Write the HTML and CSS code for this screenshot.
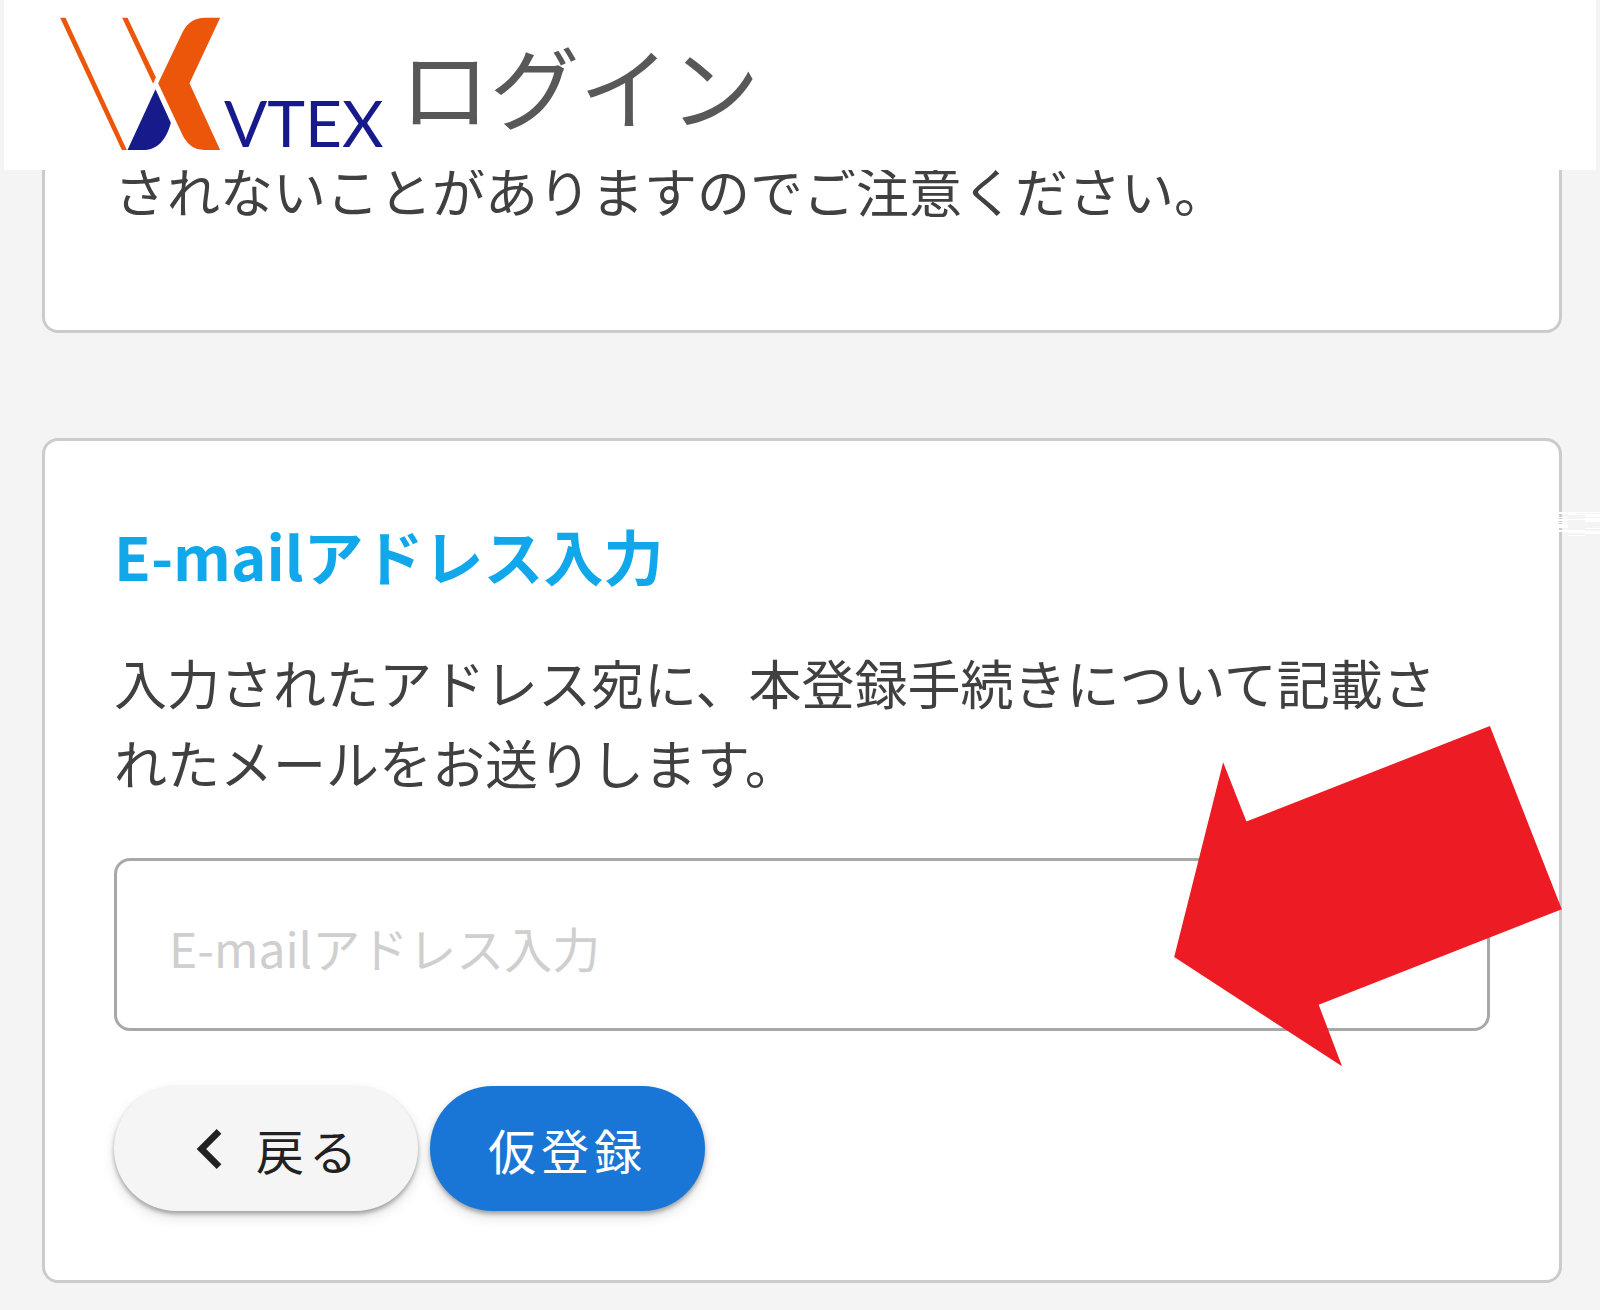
FILE: index.html
```
<!DOCTYPE html>
<html lang="ja">
<head>
  <meta charset="UTF-8" />
  <meta name="viewport" content="width=device-width, initial-scale=1.0" />
  <title>VTEX ログイン</title>
  <link rel="stylesheet" href="styles.css">
</head>
<body>
  <header>
    <div class="logo">
      <svg class="logo-mark" viewBox="180 50 482 402" aria-hidden="true">
        <path fill="#ec560b" d="M180 52H196L380 449H365Z" />
        <path fill="#ec560b" d="M366 52H382L467 231L459 250Z" />
        <path fill="#ec560b" d="M660 52H612C575 54 557 74 546 98L474 249L546 402C558 428 578 449 612 449H660L568 249Z" />
        <path fill="#171a8b" d="M466 267L512 367C500 415 472 449 430 449H382Z" />
      </svg>
      <span class="logo-name">VTEX</span>
    </div>
    <h1>ログイン</h1>
  </header>

  <main>
    <section class="card notice">
      <p>されないことがありますのでご注意ください。</p>
    </section>

    <section class="card">
      <h2>E-mailアドレス入力</h2>
      <p>入力されたアドレス宛に、本登録手続きについて記載されたメールをお送りします。</p>
      <form>
        <div class="field">
          <input type="email" aria-label="E-mailアドレス入力" placeholder="E-mailアドレス入力" />
          <svg class="arrow" viewBox="0 0 1164 1024" aria-hidden="true">
            <path fill="#ed1c24" d="M948 0L1164 550L434 837L504 1022L0 694L147 109L217 287Z" />
          </svg>
        </div>
        <div class="actions">
          <button type="button" class="btn btn-back">
            <svg viewBox="0 0 24 24" aria-hidden="true">
              <path d="M15.41 16.58L10.83 12L15.41 7.41L14 6L8 12L14 18Z" />
            </svg>
            戻る
          </button>
          <button type="submit" class="btn btn-primary">仮登録</button>
        </div>
      </form>
      <svg class="streaks" viewBox="0 0 41 26" aria-hidden="true">
        <path fill="#fff" d="M0 0H41V1H18V2H41V5H26V3H9V2H0ZM0 5H9V6H0ZM0 7H26V6H41V10H26V8H9V9H0ZM0 10H9V11H0ZM0 12H9V16H0ZM0 18H26V16H41V17H26V19H41V22H26V21H9V20H0ZM9 23H26V24H9Z" />
      </svg>
    </section>
  </main>
</body>
</html>
```
FILE: styles.css
```
/* ======================
   Base
   ====================== */
*, *::before, *::after {
  box-sizing: border-box;
  margin: 0;
  padding: 0;
}
body {
  font-family: "Noto Sans CJK JP", sans-serif;
  background-color: #f4f4f4;
  color: #404040;
}

/* ======================
   Header
   ====================== */
header {
  position: fixed;
  top: 0;
  left: 4px;
  right: 4px;
  z-index: 1;
  display: flex;
  align-items: center;
  gap: 16px;
  height: 170px;
  padding: 0 56px 3px;
  background-color: #fff;
}
header h1 {
  font-size: 90px;
  font-weight: 400;
  line-height: 120px;
  color: #585858;
}
.logo {
  display: flex;
  align-items: flex-end;
  gap: 3px;
}
.logo-mark {
  width: 161px;
  height: 134px;
}
.logo-name {
  font-family: Lato, sans-serif;
  font-size: 64px;
  line-height: 56px;
  color: #171a8b;
}

/* ======================
   Cards
   ====================== */
main {
  padding: 0 38px 26px 42px;
}
.card {
  position: relative;
  padding: 74px 69px 69px;
  border: 3px solid #cbcbcb;
  border-radius: 16px;
  background-color: #fff;
}
.notice {
  margin-bottom: 105px;
  padding: 147px 69px 100px;
}
.card h2 {
  margin-bottom: 47px;
  font-size: 60px;
  font-weight: 700;
  line-height: 80px;
  color: #10a8ea;
}
.card p {
  padding-right: 16px;
  font-size: 53px;
  line-height: 80px;
}

/* ======================
   Form
   ====================== */
.field {
  position: relative;
  margin-top: 56px;
}
.field input {
  display: block;
  width: 100%;
  height: 173px;
  padding: 4px 52px 0;
  border: 3px solid #a8a8a8;
  border-radius: 16px;
  font-family: inherit;
  font-size: 48px;
  background-color: #fff;
}
.field input::placeholder {
  color: #cfcfcf;
  opacity: 1;
}
.arrow {
  position: absolute;
  top: -132px;
  right: -72px;
  width: 388px;
  height: 341px;
}
.actions {
  display: flex;
  gap: 12px;
  margin-top: 55px;
}
.btn {
  display: flex;
  align-items: center;
  height: 125px;
  padding: 0 56px;
  border: none;
  border-radius: 63px;
  font-family: inherit;
  font-size: 48px;
  letter-spacing: 5px;
  box-shadow: 0 3px 4px rgba(0, 0, 0, 0.3), 0 6px 14px rgba(0, 0, 0, 0.12);
  cursor: pointer;
}
.btn-back {
  gap: 6px;
  background-color: #f5f5f5;
  color: #212121;
}
.btn-back svg {
  width: 80px;
  height: 80px;
  fill: #212121;
}
.btn-primary {
  padding: 0 58px;
  background-color: #1976d6;
  color: #fff;
}

/* white streaks across the card's right edge */
.streaks {
  position: absolute;
  top: 71px;
  right: -41px;
  width: 41px;
  height: 26px;
}
```
